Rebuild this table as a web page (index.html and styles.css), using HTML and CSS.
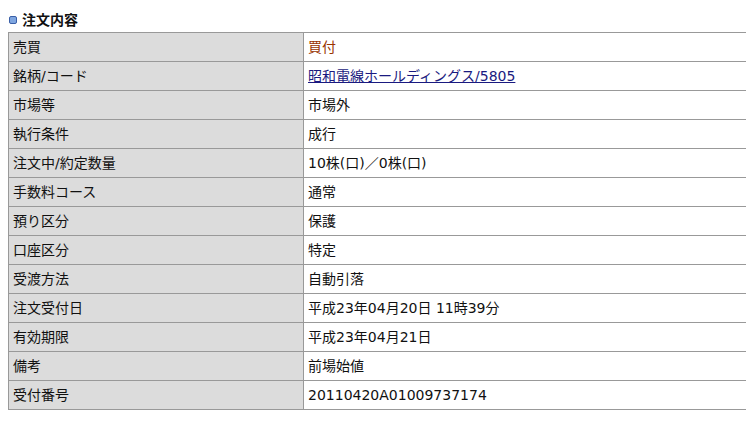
FILE: index.html
```html
<!DOCTYPE html>
<html lang="ja">
<head>
<meta charset="utf-8">
<link rel="stylesheet" href="styles.css">
</head>
<body>
<h2 class="title"><span class="bullet"></span>注文内容</h2>
<table class="detail">
<tr><th>売買</th><td class="buy">買付</td></tr>
<tr><th>銘柄/コード</th><td><a href="#">昭和電線ホールディングス/5805</a></td></tr>
<tr><th>市場等</th><td>市場外</td></tr>
<tr><th>執行条件</th><td>成行</td></tr>
<tr><th>注文中/約定数量</th><td>10株(口)／0株(口)</td></tr>
<tr><th>手数料コース</th><td>通常</td></tr>
<tr><th>預り区分</th><td>保護</td></tr>
<tr><th>口座区分</th><td>特定</td></tr>
<tr><th>受渡方法</th><td>自動引落</td></tr>
<tr><th>注文受付日</th><td>平成23年04月20日 11時39分</td></tr>
<tr><th>有効期限</th><td>平成23年04月21日</td></tr>
<tr><th>備考</th><td>前場始値</td></tr>
<tr><th>受付番号</th><td>20110420A01009737174</td></tr>
</table>
</body>
</html>
```
FILE: styles.css
```css
body {
  margin: 8px;
  background: #fff;
  font-family: "DejaVu Sans", "Noto Sans CJK JP", sans-serif;
  font-size: 14px;
  color: #111;
}
.title {
  margin: 3px 0 4px 0;
  font-size: 14px;
  font-weight: bold;
  height: 17px;
  line-height: 17px;
  display: flex;
  align-items: center;
  font-family: "Noto Sans CJK JP", sans-serif;
}
.bullet {
  display: inline-block;
  width: 6px;
  height: 6px;
  border: 1px solid #3a5fa8;
  background: #7fa6e0;
  border-radius: 2px;
  margin: 0 5px 0 1px;
}
.detail {
  width: 739px;
  border-collapse: collapse;
}
.detail th, .detail td {
  border: 1px solid #999;
  height: 28px;
  padding: 0 4px;
  text-align: left;
  font-weight: normal;
  vertical-align: middle;
  line-height: 16px;
}
.detail th {
  width: 286px;
  background: #dcdcdc;
}
.detail td {
  background: #fff;
}
.detail .buy {
  color: #993300;
}
.detail a {
  color: #1a1a80;
  text-decoration: underline;
}
```
